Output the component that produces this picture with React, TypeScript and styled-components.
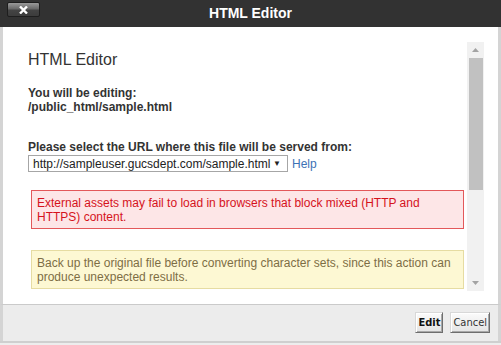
import React from 'react';
import styled, { createGlobalStyle } from 'styled-components';

const GlobalStyle = createGlobalStyle`
  html, body {
    margin: 0;
    padding: 0;
    background: #ededed;
    overflow: hidden;
  }
  body {
    font-family: 'Liberation Sans', Arial, sans-serif;
  }
`;

const Dialog = styled.div`
  width: 501px;
  height: 343px;
  display: flex;
  flex-direction: column;
  box-sizing: border-box;
  border-bottom: 2px solid #cfcfcf;
`;

const TitleBar = styled.div`
  height: 27px;
  flex: none;
  background: #323232;
  display: grid;
  grid-template-columns: 1fr auto 1fr;
  align-items: center;
`;

const CloseButton = styled.button`
  justify-self: start;
  align-self: start;
  margin: 2px 0 0 7px;
  width: 33px;
  height: 15px;
  padding: 0;
  box-sizing: border-box;
  border: 1px solid #1e1e1e;
  border-radius: 2px;
  background: linear-gradient(#9a9a9a 0%, #6a6a6a 45%, #444 55%, #3c3c3c 100%);
  display: flex;
  align-items: center;
  justify-content: center;
  cursor: pointer;
`;

const Title = styled.h1`
  margin: 0;
  color: #fff;
  font-size: 14px;
  font-weight: bold;
  line-height: 27px;
`;

const Body = styled.div`
  flex: 1;
  min-height: 0;
  background: #fff;
  border-left: 3px solid #d4d4d4;
  border-right: 3px solid #d4d4d4;
  padding: 15px 14px 13px 11px;
  display: flex;
`;

const ScrollContent = styled.div`
  flex: 1;
  min-width: 0;
  overflow: hidden;
  padding: 9px 0 0 14px;
`;

const Heading = styled.h2`
  margin: 0 0 17px;
  font-size: 16px;
  font-weight: normal;
  line-height: 18px;
  color: #333;
`;

const Strong = styled.div`
  font-size: 12px;
  line-height: 14px;
  font-weight: bold;
  color: #333;
`;

const Section = styled.div<{ $gap: number }>`
  margin-bottom: ${(p) => p.$gap}px;
`;

const SelectRow = styled.div`
  display: flex;
  align-items: center;
  margin-top: 1px;
  height: 17px;
`;

const SelectBox = styled.label`
  box-sizing: border-box;
  width: 260px;
  height: 17px;
  border: 1px solid #a6a6a6;
  display: flex;
  align-items: center;
  padding: 0 9px 0 4px;
  background: #fff;
`;

const NativeSelect = styled.select`
  appearance: none;
  border: none;
  outline: none;
  background: transparent;
  padding: 0;
  margin: 0;
  flex: 1;
  font-family: 'Liberation Sans', Arial, sans-serif;
  font-size: 12px;
  color: #222;
  height: 15px;
`;

const Arrow = styled.span`
  font-size: 8px;
  color: #222;
  margin-left: 2px;
`;

const HelpLink = styled.a`
  margin-left: 4px;
  font-size: 12px;
  color: #3d72b5;
  text-decoration: none;
`;

const Alert = styled.div<{ $tone: 'danger' | 'warning' }>`
  margin: 0 3px;
  padding: 5px 5px 4px;
  font-size: 12px;
  line-height: 14px;
  border: 1px solid ${(p) => (p.$tone === 'danger' ? '#e3585a' : '#e6dca2')};
  background: ${(p) => (p.$tone === 'danger' ? '#fde6e7' : '#fdf8d3')};
  color: ${(p) => (p.$tone === 'danger' ? '#d5131c' : '#7d6e45')};
`;

const Scrollbar = styled.div`
  width: 17px;
  flex: none;
  background: #f1f1f1;
  display: flex;
  flex-direction: column;
`;

const ScrollButton = styled.div`
  height: 16px;
  flex: none;
  display: flex;
  align-items: center;
  justify-content: center;
`;

const Thumb = styled.div`
  height: 132px;
  margin: 0 1px 0 2px;
  background: #c1c1c1;
`;

const Track = styled.div`
  flex: 1;
`;

const Footer = styled.div`
  flex: none;
  height: 35px;
  background: #ececec;
  border-top: 1px solid #cacaca;
  border-left: 3px solid #d4d4d4;
  border-right: 3px solid #d4d4d4;
  display: flex;
  justify-content: flex-end;
  align-items: center;
  gap: 7px;
  padding: 0 8px 1px 0;
`;

const FooterButton = styled.button<{ $primary?: boolean }>`
  height: 21px;
  padding: 0 2px;
  box-sizing: border-box;
  font-family: 'DejaVu Sans', Verdana, sans-serif;
  font-stretch: condensed;
  font-size: 11px;
  font-weight: ${(p) => (p.$primary ? 'bold' : 'normal')};
  color: ${(p) => (p.$primary ? '#111' : '#333')};
  background: linear-gradient(#fbfbfb, #e4e4e4);
  border: 1px solid;
  border-color: #d8d8d8 #6e6e6e #6e6e6e #d8d8d8;
  box-shadow: inset 1px 1px 0 #fff, inset -1px -1px 0 #a8a8a8;
  cursor: pointer;
`;

const ArrowIcon = ({ down }: { down?: boolean }) => (
  <svg width="7" height="4" viewBox="0 0 7 4">
    <polygon points={down ? '0,0 7,0 3.5,4' : '0,4 7,4 3.5,0'} fill="#a3a3a3" />
  </svg>
);

const App: React.FC = () => {
  return (
    <>
      <GlobalStyle />
      <Dialog>
        <TitleBar>
          <CloseButton aria-label="Close">
            <svg width="9" height="8" viewBox="0 0 9 8">
              <path d="M1 0.5 L8 7.5 M8 0.5 L1 7.5" stroke="#fff" strokeWidth="2.4" />
            </svg>
          </CloseButton>
          <Title>HTML Editor</Title>
          <span />
        </TitleBar>
        <Body>
          <ScrollContent>
            <Heading>HTML Editor</Heading>
            <Section $gap={26}>
              <Strong>You will be editing:</Strong>
              <Strong>/public_html/sample.html</Strong>
            </Section>
            <Section $gap={18}>
              <Strong>Please select the URL where this file will be served from:</Strong>
              <SelectRow>
                <SelectBox>
                  <NativeSelect defaultValue="sample">
                    <option value="sample">http://sampleuser.gucsdept.com/sample.html</option>
                  </NativeSelect>
                  <Arrow>▼</Arrow>
                </SelectBox>
                <HelpLink href="#">Help</HelpLink>
              </SelectRow>
            </Section>
            <Section $gap={21}>
              <Alert $tone="danger">
                External assets may fail to load in browsers that block mixed (HTTP and HTTPS) content.
              </Alert>
            </Section>
            <Alert $tone="warning">
              Back up the original file before converting character sets, since this action can produce
              unexpected results.
            </Alert>
          </ScrollContent>
          <Scrollbar>
            <ScrollButton>
              <ArrowIcon />
            </ScrollButton>
            <Thumb />
            <Track />
            <ScrollButton>
              <ArrowIcon down />
            </ScrollButton>
          </Scrollbar>
        </Body>
        <Footer>
          <FooterButton $primary>Edit</FooterButton>
          <FooterButton>Cancel</FooterButton>
        </Footer>
      </Dialog>
    </>
  );
};

export default App;
